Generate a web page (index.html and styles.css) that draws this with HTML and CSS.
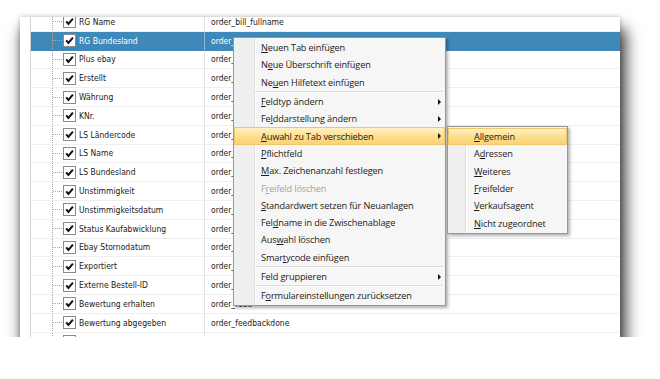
FILE: index.html
```html
<!DOCTYPE html>
<html>
<head>
    <meta charset="utf-8">
    <link rel="stylesheet" href="styles.css">
</head>
<body>
    <svg class="defs" width="0" height="0">
        <symbol id="tick" viewBox="0 0 13 13">
            <rect x="0.5" y="0.5" width="12" height="12" fill="#fff" stroke="#8a8a8a"/>
            <path d="M3.2 6.4 L5.4 8.9 L9.9 3.6" fill="none" stroke="#111" stroke-width="2"/>
        </symbol>
    </svg>

    <div class="window">
        <div class="grid">
            <div class="row">
                <div class="cell name"><span class="tree"></span><svg class="check"><use href="#tick"/></svg><span>RG Name</span></div>
                <div class="cell field">order_bill_fullname</div>
            </div>
            <div class="row selected">
                <div class="cell name"><span class="tree"></span><svg class="check"><use href="#tick"/></svg><span>RG Bundesland</span></div>
                <div class="cell field">order_bill</div>
            </div>
            <div class="row">
                <div class="cell name"><span class="tree"></span><svg class="check"><use href="#tick"/></svg><span>Plus ebay</span></div>
                <div class="cell field">order_plus</div>
            </div>
            <div class="row">
                <div class="cell name"><span class="tree"></span><svg class="check"><use href="#tick"/></svg><span>Erstellt</span></div>
                <div class="cell field">order_date</div>
            </div>
            <div class="row">
                <div class="cell name"><span class="tree"></span><svg class="check"><use href="#tick"/></svg><span>Währung</span></div>
                <div class="cell field">order_curr</div>
            </div>
            <div class="row">
                <div class="cell name"><span class="tree"></span><svg class="check"><use href="#tick"/></svg><span>KNr.</span></div>
                <div class="cell field">order_cust</div>
            </div>
            <div class="row">
                <div class="cell name"><span class="tree"></span><svg class="check"><use href="#tick"/></svg><span>LS Ländercode</span></div>
                <div class="cell field">order_ship</div>
            </div>
            <div class="row">
                <div class="cell name"><span class="tree"></span><svg class="check"><use href="#tick"/></svg><span>LS Name</span></div>
                <div class="cell field">order_ship</div>
            </div>
            <div class="row">
                <div class="cell name"><span class="tree"></span><svg class="check"><use href="#tick"/></svg><span>LS Bundesland</span></div>
                <div class="cell field">order_ship</div>
            </div>
            <div class="row">
                <div class="cell name"><span class="tree"></span><svg class="check"><use href="#tick"/></svg><span>Unstimmigkeit</span></div>
                <div class="cell field">order_diff</div>
            </div>
            <div class="row">
                <div class="cell name"><span class="tree"></span><svg class="check"><use href="#tick"/></svg><span>Unstimmigkeitsdatum</span></div>
                <div class="cell field">order_diff</div>
            </div>
            <div class="row">
                <div class="cell name"><span class="tree"></span><svg class="check"><use href="#tick"/></svg><span>Status Kaufabwicklung</span></div>
                <div class="cell field">order_stat</div>
            </div>
            <div class="row">
                <div class="cell name"><span class="tree"></span><svg class="check"><use href="#tick"/></svg><span>Ebay Stornodatum</span></div>
                <div class="cell field">order_canc</div>
            </div>
            <div class="row">
                <div class="cell name"><span class="tree"></span><svg class="check"><use href="#tick"/></svg><span>Exportiert</span></div>
                <div class="cell field">order_expo</div>
            </div>
            <div class="row">
                <div class="cell name"><span class="tree"></span><svg class="check"><use href="#tick"/></svg><span>Externe Bestell-ID</span></div>
                <div class="cell field">order_extn</div>
            </div>
            <div class="row">
                <div class="cell name"><span class="tree"></span><svg class="check"><use href="#tick"/></svg><span>Bewertung erhalten</span></div>
                <div class="cell field">order_feed</div>
            </div>
            <div class="row">
                <div class="cell name"><span class="tree"></span><svg class="check"><use href="#tick"/></svg><span>Bewertung abgegeben</span></div>
                <div class="cell field">order_feedbackdone</div>
            </div>
            <div class="row">
                <div class="cell name"><span class="tree"></span><svg class="check"><use href="#tick"/></svg></div>
                <div class="cell field"></div>
            </div>
        </div>
    </div>

    <div class="menu context">
        <div class="item"><span><u>N</u>euen Tab einfügen</span></div>
        <div class="item"><span>N<u>e</u>ue Überschrift einfügen</span></div>
        <div class="item"><span>Ne<u>u</u>en Hilfetext einfügen</span></div>
        <div class="sep"></div>
        <div class="item"><span><u>F</u>eldtyp ändern</span><span class="arrow"></span></div>
        <div class="item"><span>Fe<u>l</u>ddarstellung ändern</span><span class="arrow"></span></div>
        <div class="item hot"><span><u>A</u>uwahl zu Tab verschieben</span><span class="arrow"></span></div>
        <div class="item"><span><u>P</u>flichtfeld</span></div>
        <div class="item"><span><u>M</u>ax. Zeichenanzahl festlegen</span></div>
        <div class="item disabled"><span>F<u>r</u>eifeld löschen</span></div>
        <div class="item"><span><u>S</u>tandardwert setzen für Neuanlagen</span></div>
        <div class="item"><span>Fel<u>d</u>name in die Zwischenablage</span></div>
        <div class="item"><span>Aus<u>w</u>ahl löschen</span></div>
        <div class="item"><span>Smar<u>t</u>ycode einfügen</span></div>
        <div class="sep"></div>
        <div class="item"><span>Feld <u>g</u>ruppieren</span><span class="arrow"></span></div>
        <div class="sep"></div>
        <div class="item"><span>F<u>o</u>rmulareinstellungen zurücksetzen</span></div>
    </div>

    <div class="menu sub">
        <div class="item hot"><span><u>A</u>llgemein</span></div>
        <div class="item"><span>A<u>d</u>ressen</span></div>
        <div class="item"><span><u>W</u>eiteres</span></div>
        <div class="item"><span><u>F</u>reifelder</span></div>
        <div class="item"><span><u>V</u>erkaufsagent</span></div>
        <div class="item"><span><u>N</u>icht zugeordnet</span></div>
    </div>
</body>
</html>
```

FILE: styles.css
```css
body {
    margin: 0;
    background: #ffffff;
    font-family: "Liberation Sans", Arial, sans-serif;
}

.defs {
    position: absolute;
}

/* Fenster mit der Feldliste */
.window {
    width: 600px;
    height: 320px;
    margin: 17px 0 0 20px;
    background: #ffffff;
    overflow: hidden;
    box-shadow: 4px 14px 14px 2px rgba(0, 0, 0, 0.75), 0 0 5px rgba(0, 0, 0, 0.25);
}

.grid {
    margin: -4px 0 0 10px;
    border-left: 1px solid #d4d4d4;
}

.row {
    display: flex;
    height: 18.8px;
    box-sizing: border-box;
    border-bottom: 1px solid #efefef;
    font-family: "DejaVu Sans Condensed", "DejaVu Sans", sans-serif;
    font-size: 8.5px;
    color: #1a1a1a;
}

.cell {
    display: flex;
    align-items: center;
}

.name {
    width: 173px;
    flex: none;
    border-right: 1px solid #e4e4e4;
}

.field {
    padding-left: 6px;
}

.tree {
    width: 32px;
    align-self: stretch;
    background:
        repeating-linear-gradient(to bottom, #a8a8a8 0 1px, transparent 1px 2px) 21px 0 / 1px 100% no-repeat,
        repeating-linear-gradient(to right, #a8a8a8 0 1px, transparent 1px 2px) 22px 50% / 9px 1px no-repeat;
}

.check {
    width: 13px;
    height: 13px;
    margin-right: 3px;
    flex: none;
}

.selected {
    background: #3e88ba;
    color: #ffffff;
    border-bottom-color: #3e88ba;
}

.selected .name {
    border-right-color: #8fb8d6;
}

/* Kontextmenü */
.menu {
    position: absolute;
    box-sizing: border-box;
    border: 1px solid #979797;
    padding: 1px 0;
    background-color: #f6f6f6;
    font-family: "Open Sans", "Noto Sans", sans-serif;
    font-size: 9.2px;
    letter-spacing: -0.15px;
    color: #1b1b1b;
    box-shadow: 2px 2px 3px rgba(0, 0, 0, 0.3);
}

.context {
    left: 233px;
    top: 37px;
    width: 213px;
    background-image: linear-gradient(to right, #efefef 20px, #e0e0e0 20px 21px, #ffffff 21px 22px, transparent 22px);
}

.sub {
    left: 447px;
    top: 126px;
    width: 121px;
    background-image: linear-gradient(to right, #efefef 17px, #e0e0e0 17px 18px, #ffffff 18px 19px, transparent 19px);
}

.item {
    display: flex;
    align-items: center;
    height: 17.3px;
    box-sizing: border-box;
    padding: 0 3px 0 26px;
    border: 1px solid transparent;
}

.sub .item {
    padding-left: 25px;
}

.item u {
    text-decoration-thickness: 1px;
    text-underline-offset: 1px;
}

.item.hot {
    background: linear-gradient(#fff1c6, #fde08f 50%, #fbd276);
    border-color: #f0c66a;
}

.item.disabled {
    color: #a3a3a3;
}

.arrow {
    margin-left: auto;
    width: 0;
    height: 0;
    border-top: 3px solid transparent;
    border-bottom: 3px solid transparent;
    border-left: 3px solid #111111;
}

.sep {
    height: 2px;
    box-sizing: border-box;
    margin: 0 2px 0 21px;
    border-top: 1px solid #dcdcdc;
    border-bottom: 1px solid #ffffff;
}
```
